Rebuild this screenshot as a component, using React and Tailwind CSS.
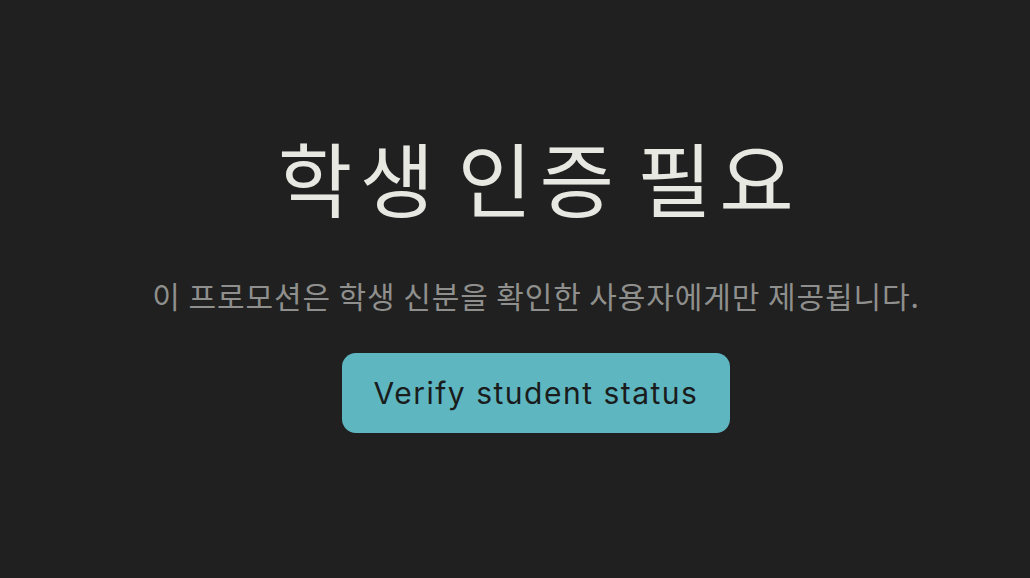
export default function App() {
  return (
    <div
      className="min-h-screen w-full flex flex-col items-center justify-center bg-[#1f201f] pl-[42px] pb-[10px]"
      style={{ fontFamily: '"Noto Sans CJK KR", "Noto Sans", sans-serif' }}
    >
      <h1 className="text-[81px] leading-none text-[#e8e8e2] font-normal tracking-[7.5px] [word-spacing:-10px] -mr-[7px]">
        학생 인증 필요
      </h1>
      <p className="mt-[64px] text-[30px] leading-none text-[#8f8f8d] tracking-[0.9px]">
        이 프로모션은 학생 신분을 확인한 사용자에게만 제공됩니다.
      </p>
      <button
        type="button"
        className="mt-[43px] w-[388px] h-[80px] rounded-[14px] bg-[#5eb6c1] text-[#1a1c1c] text-[30px] tracking-[1.5px] font-[Inter,sans-serif]"
      >
        Verify student status
      </button>
    </div>
  );
}
